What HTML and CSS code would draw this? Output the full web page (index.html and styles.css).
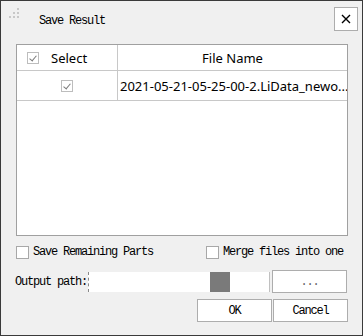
FILE: index.html
```html
<!DOCTYPE html>
<html>
<head>
<meta charset="utf-8">
<link rel="stylesheet" href="styles.css">
</head>
<body>
<div class="win">
  <div class="titlebar">
    <svg class="grip" width="12" height="12" viewBox="0 0 12 12">
      <g fill="#c8c8c8">
        <rect x="8" y="0" width="2" height="2"/>
        <rect x="4" y="4" width="2" height="2"/><rect x="8" y="4" width="2" height="2"/>
        <rect x="0" y="8" width="2" height="2"/><rect x="4" y="8" width="2" height="2"/><rect x="8" y="8" width="2" height="2"/>
      </g>
    </svg>
    <span class="title">Save Result</span>
    <button class="close">
      <svg width="10" height="10" viewBox="0 0 10 10"><path d="M1 1L9 9M9 1L1 9" stroke="#000" stroke-width="1.4"/></svg>
    </button>
  </div>
  <div class="table">
    <div class="row head">
      <div class="cell c1"><span class="cb checked small"></span><span class="htext">Select</span></div>
      <div class="cell c2 center">File Name</div>
    </div>
    <div class="row body">
      <div class="cell c1 center"><span class="cb checked small"></span></div>
      <div class="cell c2">2021-05-21-05-25-00-2.LiData_newo...</div>
    </div>
  </div>
  <div class="opts">
    <label class="opt"><span class="cb"></span>Save Remaining Parts</label>
    <label class="opt"><span class="cb"></span>Merge files into one</label>
  </div>
  <div class="pathrow">
    <span class="lbl">Output path:</span>
    <div class="field"><span class="thumb"></span></div>
    <button class="btn browse">...</button>
  </div>
  <div class="btnrow">
    <button class="btn">OK</button>
    <button class="btn">Cancel</button>
  </div>
</div>
</body>
</html>
```
FILE: styles.css
```css
html, body { margin: 0; padding: 0; }
body { width: 363px; height: 336px; overflow: hidden; background: #f0f0f0; }
.win {
  box-sizing: border-box;
  width: 363px; height: 336px;
  border: 1px solid #3a3a3a;
  background: #f0f0f0;
  display: flex; flex-direction: column;
  font-family: "Liberation Mono", monospace;
  font-size: 12px; letter-spacing: -1.2px;
  color: #000;
}
.titlebar { height: 43px; display: flex; align-items: flex-start; position: relative; }
.grip { margin: 7px 0 0 8px; }
.title { margin: 13px 0 0 18px; line-height: 14px; }
.close {
  position: absolute; right: 4px; top: 6px;
  width: 24px; height: 24px; box-sizing: border-box;
  border: 1px solid #adadad; background: #fff; padding: 0;
  display: flex; align-items: center; justify-content: center;
}
.table {
  margin-left: 15px; width: 332px; height: 192px; box-sizing: border-box;
  border: 1px solid #a0a0a0; background: #fff;
  font-family: "Noto Sans", sans-serif; font-size: 13px; letter-spacing: 0;
  color: #000;
}
.row { display: flex; border-bottom: 1px solid #c8c8c8; }
.head { height: 25px; }
.body { height: 29px; }
.cell { display: flex; align-items: center; box-sizing: border-box; white-space: nowrap; overflow: hidden; }
.c1 { width: 101px; border-right: 1px solid #c8c8c8; padding-left: 10px; }
.c2 { flex: 1; padding-left: 2px; }
.center { justify-content: center; padding-left: 0; }
.htext { margin-left: 12px; }
.cb {
  display: inline-block; width: 13px; height: 13px; box-sizing: border-box;
  border: 1px solid #a8a8a8; background: #fff; flex: none; position: relative;
}
.cb.small { width: 12px; height: 12px; border-color: #bdbdbd; }
.cb.checked::after {
  content: ""; position: absolute; left: 3px; top: 1px;
  width: 3px; height: 6px;
  border-right: 1px solid #7a7a7a; border-bottom: 1px solid #7a7a7a;
  transform: rotate(40deg);
}
.opts { display: flex; justify-content: space-between; margin: 10px 19px 0 15px; height: 13px; }
.opt { display: flex; align-items: center; line-height: 13px; }
.opt .cb { margin-right: 4px; }
.pathrow { display: flex; align-items: center; margin: 11px 0 0 14px; height: 23px; }
.lbl { width: 73px; }
.field {
  width: 182px; height: 20px; box-sizing: border-box; background: #fff;
  border-left: 1px dashed #888; border-right: 1px solid #c0c0c0;
  position: relative;
}
.thumb { position: absolute; left: 121px; top: 0; width: 20px; height: 20px; background: #7a7a7a; }
.btn {
  width: 75px; height: 23px; box-sizing: border-box; margin: 0 0 0 1px;
  border: 1px solid #adadad; background: #fff; padding: 0;
  font-family: "Liberation Mono", monospace; font-size: 12px; letter-spacing: -1.2px; color: #000;
}
.btn.browse { color: #666; margin-left: 2px; }
.btnrow { display: flex; justify-content: flex-end; margin: 6px 14px 0 0; }
```
